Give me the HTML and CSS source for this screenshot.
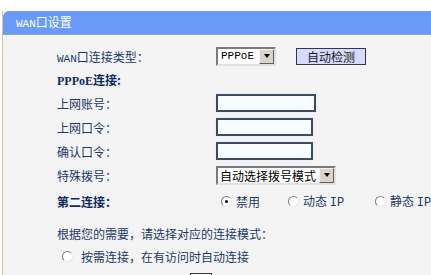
FILE: index.html
```html
<!DOCTYPE html>
<html>
<head>
<meta charset="utf-8">
<link rel="stylesheet" href="styles.css">
</head>
<body>
<div class="panel">
  <div class="head"><span class="lat">WAN</span>口设置</div>
  <div class="content">
    <div class="row r1">
      <div class="label"><span class="lat">WAN</span>口连接类型：</div>
      <div class="field">
        <div class="select sel-type"><span class="val lat2">PPPoE</span><span class="arrow"><i></i></span></div>
        <div class="btn">自动检测</div>
      </div>
    </div>
    <div class="row r2">
      <div class="label bold"><span class="latb">PPPoE</span>连接:</div>
    </div>
    <div class="row">
      <div class="label">上网账号：</div>
      <div class="field"><div class="input w100"></div></div>
    </div>
    <div class="row">
      <div class="label">上网口令：</div>
      <div class="field"><div class="input w97"></div></div>
    </div>
    <div class="row">
      <div class="label">确认口令：</div>
      <div class="field"><div class="input w97"></div></div>
    </div>
    <div class="row">
      <div class="label">特殊拨号：</div>
      <div class="field">
        <div class="select sel-dial"><span class="val">自动选择拨号模式</span><span class="arrow"><i></i></span></div>
      </div>
    </div>
    <div class="row r7">
      <div class="label bold">第二连接：</div>
      <div class="field radios">
        <label class="opt o1"><span class="radio on"></span><span class="txt">禁用</span></label>
        <label class="opt o2"><span class="radio"></span><span class="txt">动态&nbsp;<span class="ip">IP</span></span></label>
        <label class="opt o3"><span class="radio"></span><span class="txt">静态&nbsp;<span class="ip">IP</span></span></label>
      </div>
    </div>
    <div class="row r8">
      <div class="full">根据您的需要，请选择对应的连接模式：</div>
    </div>
    <div class="row r9">
      <div class="full opt"><span class="radio r9radio"></span><span class="txt">按需连接，在有访问时自动连接</span></div>
    </div>
    <div class="row r10">
      <div class="box"></div>
    </div>
  </div>
</div>
</body>
</html>
```
FILE: styles.css
```css
html, body {
  margin: 0;
  padding: 0;
  background: #ffffff;
  overflow: hidden;
}
body {
  width: 431px;
  height: 275px;
  font-family: "Noto Sans CJK SC", sans-serif;
  font-size: 12px;
  color: #1d3866;
}
.panel {
  margin-top: 11px;
  margin-left: 2px;
  border-left: 1px solid #d9c58e;
  height: 264px;
  background: #f4f4f4;
  overflow: hidden;
}
.head {
  height: 23px;
  line-height: 22px;
  background: #6a9bfb;
  border-bottom: 1px solid #8da6c8;
  border-top-left-radius: 6px;
  color: #ffffff;
  padding-left: 13px;
}
.lat {
  font-family: "Liberation Mono", monospace;
  font-size: 11px;
}
.ip {
  font-family: "Liberation Mono", monospace;
  font-size: 12px;
}
.lat2 {
  font-family: "Liberation Mono", monospace;
  font-size: 11px;
  color: #000;
}
.latb {
  font-family: "Liberation Serif", serif;
  font-weight: bold;
  font-size: 12px;
}
.content {
  padding-top: 9px;
  padding-left: 54px;
}
.row {
  display: flex;
  align-items: center;
  height: 24px;
}
.r2 { height: 23px; }
.r7 { margin-top: 2px; }
.r8 { margin-top: 8px; }
.r9 { height: 23px; }
.label {
  width: 159px;
  flex: none;
  white-space: nowrap;
}
.bold {
  font-weight: bold;
  color: #0f2b5c;
}
.field {
  display: flex;
  align-items: center;
}
.select {
  height: 19px;
  box-sizing: border-box;
  border: 2px solid;
  border-color: #7a7a7a #e0e0e0 #e0e0e0 #7a7a7a;
  background: #ffffff;
  display: flex;
  align-items: center;
  color: #000;
}
.select .val {
  flex: 1;
  padding-left: 3px;
  white-space: nowrap;
  line-height: 15px;
  overflow: hidden;
}
.sel-type { width: 60px; }
.sel-dial { width: 120px; }
.sel-dial .val { padding-left: 2px; }
.arrow {
  width: 15px;
  height: 15px;
  flex: none;
  box-sizing: border-box;
  background: #d8d4cc;
  border: 1px solid;
  border-color: #f4f4f4 #606060 #606060 #f4f4f4;
  display: flex;
  align-items: center;
  justify-content: center;
}
.arrow i {
  width: 0;
  height: 0;
  border-left: 3px solid transparent;
  border-right: 3px solid transparent;
  border-top: 4px solid #000;
}
.btn {
  margin-left: 20px;
  width: 70px;
  height: 17px;
  box-sizing: border-box;
  border: 1px solid #303848;
  background: #d4dbfb;
  color: #1a1a1a;
  text-align: center;
  line-height: 15px;
  font-size: 12px;
}
.input {
  height: 18px;
  box-sizing: border-box;
  border: 2px solid #3c4b5e;
  background: #f8fbff;
  box-shadow: 0 0 3px #dfe8f8;
}
.w100 { width: 100px; }
.w97 { width: 97px; }
.radios { padding-left: 5px; }
.opt {
  display: flex;
  align-items: center;
  white-space: nowrap;
}
.o1 { width: 67px; }
.o2 { width: 87px; }
.radio {
  width: 11px;
  height: 11px;
  box-sizing: border-box;
  border-radius: 50%;
  border: 1px solid;
  border-color: #808080 #e8e8e8 #e8e8e8 #808080;
  background: #ffffff;
  margin-right: 4px;
  position: relative;
  flex: none;
}
.radio.on::after {
  content: "";
  position: absolute;
  left: 3px;
  top: 3px;
  width: 3px;
  height: 3px;
  border-radius: 50%;
  background: #000;
}
.r9radio {
  margin-left: 5px;
  margin-right: 8px;
}
.full { white-space: nowrap; }
.r10 {
  height: 7px;
  align-items: flex-start;
}
.box {
  margin-left: 133px;
  margin-top: 5px;
  width: 22px;
  height: 2px;
  box-sizing: border-box;
  border: 1px solid #333;
  border-bottom: none;
  background: #fff;
}
```
